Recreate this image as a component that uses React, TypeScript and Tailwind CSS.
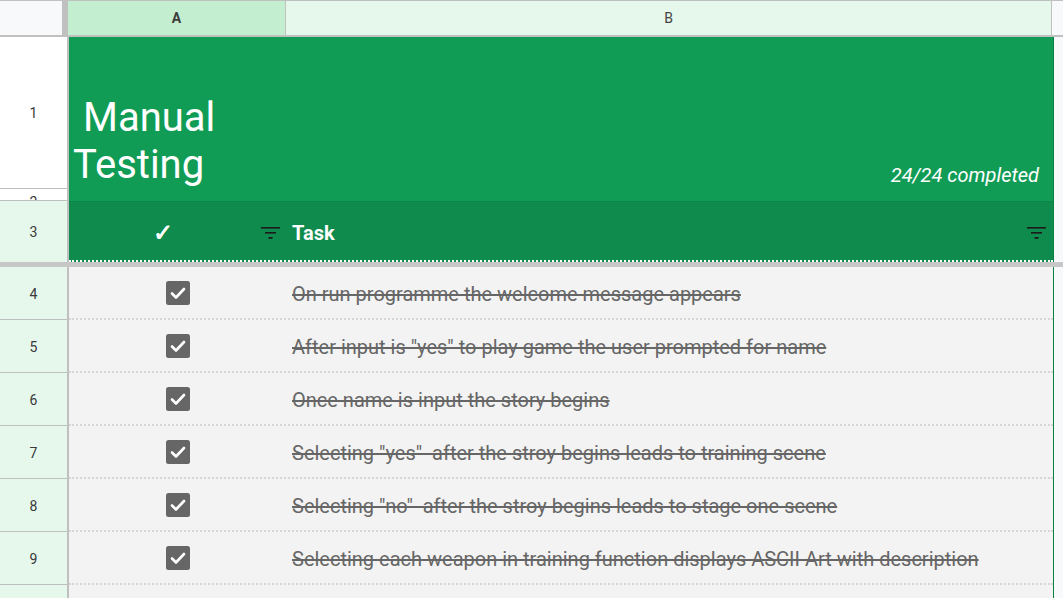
import React from 'react'

const tasks = [
  'On run programme the welcome message appears',
  'After input is "yes" to play game the user prompted for name',
  'Once name is input the story begins',
  'Selecting "yes"  after the stroy begins leads to training scene',
  'Selecting "no"  after the stroy begins leads to stage one scene',
  'Selecting each weapon in training function displays ASCII Art with description',
]

function FilterIcon() {
  return (
    <svg width="20" height="12" viewBox="0 0 20 12" className="shrink-0">
      <rect x="0" y="0" width="19" height="1.6" fill="#1b1b1b" />
      <rect x="4" y="5" width="11" height="1.6" fill="#1b1b1b" />
      <rect x="7.5" y="10" width="4" height="1.8" fill="#1b1b1b" />
    </svg>
  )
}

function CheckBox() {
  return (
    <svg width="24" height="24" viewBox="0 0 24 24">
      <rect x="0" y="0" width="24" height="24" rx="2.5" fill="#666666" />
      <path d="M6 12.5l4 4 8-8.5" stroke="#ffffff" strokeWidth="2.6" fill="none" strokeLinecap="round" strokeLinejoin="round" />
    </svg>
  )
}

export default function App() {
  return (
    <div className="w-[1063px] h-[598px] overflow-hidden bg-[#f8f9fa] flex flex-col font-['Roboto',sans-serif]">
      {/* Column headers */}
      <div className="flex h-[37px] shrink-0 border-t border-b-2 border-[#c0c0c0]">
        <div className="w-[62px] bg-[#f8f9fa]" />
        <div className="w-[6px] bg-[#c0c0c0]" />
        <div className="w-[218px] bg-[#c4eed0] border-r border-[#c0c0c0] flex items-center justify-center pt-[1px] text-[14px] font-bold text-[#3c3c3c]">A</div>
        <div className="w-[766px] bg-[#e6f7ec] border-r border-[#c0c0c0] flex items-center justify-center pt-[1px] text-[14px] text-[#444]">B</div>
        <div className="flex-1 bg-[#f8f9fa]" />
      </div>

      {/* Frozen rows 1-3 */}
      <div className="flex shrink-0">
        <div className="w-[69px] border-r-2 border-[#c0c0c0] flex flex-col text-[14px] text-[#3a3a3a]">
          <div className="h-[152px] bg-white border-b border-[#c0c0c0] flex items-center justify-center pt-[2px]">1</div>
          <div className="h-[12px] bg-white border-b border-[#c0c0c0] overflow-hidden flex justify-center">
            <span className="leading-[16px] mt-[5px]">2</span>
          </div>
          <div className="h-[61px] bg-[#e6f7ec] flex items-center justify-center pt-[2px]">3</div>
        </div>
        <div className="w-[985px] border-r border-[#0b8043] flex flex-col">
          <div className="h-[164px] bg-[#119c56] flex">
            <div className="w-[218px] flex flex-col justify-end pb-[13px] text-white text-[40px] leading-[47px]">
              <span className="pl-[14px]">Manual</span>
              <span className="pl-[4px]">Testing</span>
            </div>
            <div className="flex-1 flex items-end justify-end pr-[14px] pb-[11px] text-white italic text-[20px]">24/24 completed</div>
          </div>
          <div className="h-[61px] bg-[#0e8b4d] border-t border-[#0c7f45] border-b-2 border-dotted border-b-white flex pt-[3px]">
            <div className="w-[218px] flex items-center pl-[84px] pr-[6px]">
              <span className="text-white text-[24px] font-bold w-[50px]">✓</span>
              <span className="flex-1" />
              <FilterIcon />
            </div>
            <div className="flex-1 flex items-center pl-[5px] pr-[6px]">
              <span className="text-white text-[20px] font-bold flex-1">Task</span>
              <FilterIcon />
            </div>
          </div>
        </div>
        <div className="flex-1" />
      </div>

      <div className="h-[5px] bg-[#c7c7c7] shrink-0" />

      {/* Data rows */}
      {[...tasks, ''].map((t, i) => (
        <div key={i} className="flex shrink-0 h-[53px]">
          <div className="w-[69px] border-r-2 border-[#c0c0c0]">
            <div className="h-[53px] bg-[#e6f7ec] border-b border-[#c0c0c0] flex items-center justify-center pt-[2px] text-[14px] text-[#3a3a3a]">
              {i < tasks.length ? i + 4 : ''}
            </div>
          </div>
          <div className="w-[984px] bg-[#f3f3f3] border-b-2 border-dotted border-[#d6d6d6] flex items-center">
            <div className="w-[218px] flex justify-center">{t && <CheckBox />}</div>
            <div className="flex-1 pl-[5px] pt-[2px] text-[20px] text-[#666] line-through whitespace-pre">{t}</div>
          </div>
          <div className="w-px bg-[#0b8043]" />
          <div className="flex-1" />
        </div>
      ))}
    </div>
  )
}
